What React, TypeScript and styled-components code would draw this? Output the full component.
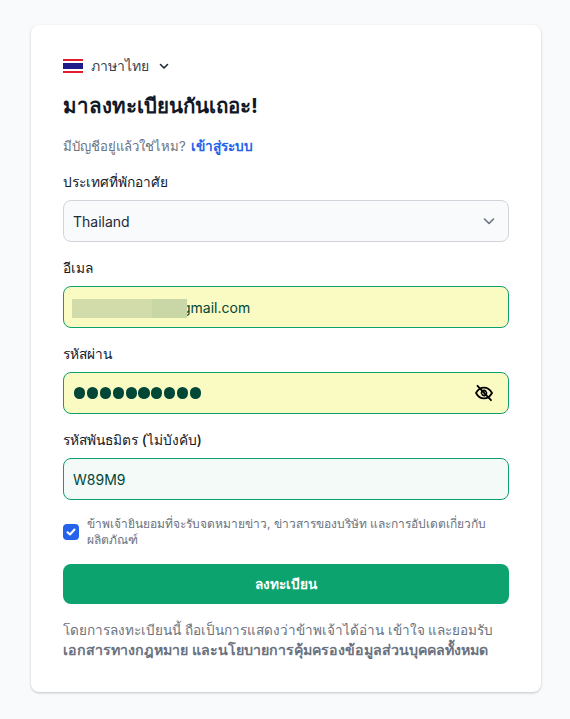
import React from "react";
import styled, { createGlobalStyle } from "styled-components";

const Global = createGlobalStyle`
  html, body { margin: 0; padding: 0; background: #f9fafb; }
  * { box-sizing: border-box; }
  body { font-family: Inter, sans-serif; color: #111827; }
`;
const Page = styled.div`
  width: 570px; height: 719px; padding: 25px 29px 27px 31px; overflow: hidden;
`;
const Card = styled.form`
  width: 510px; height: 667px; background: #fff; border-radius: 8px;
  box-shadow: 0 1px 3px rgba(0,0,0,.15), 0 1px 2px rgba(0,0,0,.08);
  padding: 32px; display: flex; flex-direction: column;
`;
const Lang = styled.div`
  display: flex; align-items: center; height: 18px; font-size: 14px; color: #374151;
`;
const LangText = styled.span` margin-left: 8px; margin-right: 9px; `;
const Title = styled.h1`
  margin: 17px 0 0; font-size: 20.5px; line-height: 28px; font-weight: 700; color: #111827;
`;
const Sub = styled.p`
  margin: 16px 0 0; font-size: 13.2px; line-height: 20px; color: #6b7280;
`;
const SubLink = styled.a` color: #2563eb; font-weight: 600; font-size: 13.7px; margin-left: 2px; `;
const Label = styled.label`
  display: block; margin-top: ${p => p.$top ?? 16}px; font-size: 13.75px; line-height: 20px; font-weight: 500; color: #111827;
`;
const Field = styled.div`
  position: relative; margin-top: 8px; height: 42px; border-radius: 8px; border: 1px solid ${p => p.$border};
  background: ${p => p.$bg}; color: ${p => p.$color}; font-size: 14px;
  display: flex; align-items: center; justify-content: space-between; padding: 0 ${p => p.$right ?? 9}px 0 9px;
`;
const Blur = styled.div`
  position: absolute; left: 8px; top: 12px; width: 115px; height: 19px;
  background: linear-gradient(90deg, #d2dcaa 0 80px, #c9d6a6 80px 115px);
`;
const EmailText = styled.span` padding-left: 109px; `;
const Dots = styled.span` display: flex; gap: 1.7px; margin-left: 1px; `;
const Dot = styled.i` display: block; width: 11.2px; height: 11.2px; border-radius: 50%; background: #014737; `;
const ConsentRow = styled.div` display: flex; align-items: center; gap: 8px; margin-top: 16px; `;
const Check = styled.span`
  flex: none; width: 16px; height: 16px; border-radius: 4px; background: #2563eb;
  display: flex; align-items: center; justify-content: center;
`;
const ConsentText = styled.span` font-size: 12px; line-height: 16px; color: #6b7280; `;
const Submit = styled.button`
  margin-top: 16px; height: 40px; width: 100%; border: 0; border-radius: 8px; background: #0ca36e;
  color: #fff; font: 600 13.6px Inter, sans-serif;
`;
const Terms = styled.p`
  margin: 16px 0 0; font-size: 13.55px; line-height: 20px; color: #6b7280;
`;
const TermsStrong = styled.span` font-weight: 600; font-size: 14.2px; `;

export default function App() {
  return (
    <Page>
      <Global />
      <Card>
        <Lang>
          <svg width="20" height="14" viewBox="0 0 20 14">
            <rect width="20" height="14" fill="#fff" />
            <rect width="20" height="2" fill="#e11d2e" />
            <rect y="12" width="20" height="2" fill="#e11d2e" />
            <rect y="4" width="20" height="6" fill="#1e1b8a" />
          </svg>
          <LangText>ภาษาไทย</LangText>
          <svg width="12" height="12" viewBox="0 0 12 12" fill="none" stroke="#1f2937" strokeWidth="1.6" strokeLinecap="round" strokeLinejoin="round">
            <path d="M2.5 4.5 6 8l3.500-3.500" />
          </svg>
        </Lang>
        <Title>มาลงทะเบียนกันเถอะ!</Title>
        <Sub>มีบัญชีอยู่แล้วใช่ไหม? <SubLink>เข้าสู่ระบบ</SubLink></Sub>
        <Label>ประเทศที่พักอาศัย</Label>
        <Field $border="#d1d5db" $bg="#f9fafb" $color="#1f2937" $right={12}>
          <span>Thailand</span>
          <svg width="14" height="14" viewBox="0 0 14 14" fill="none" stroke="#6b7280" strokeWidth="1.6" strokeLinecap="round" strokeLinejoin="round">
            <path d="M2.500 5 7 9.500 11.500 5" />
          </svg>
        </Field>
        <Label>อีเมล</Label>
        <Field $border="#0e9f6e" $bg="#fafac3" $color="#014737">
          <EmailText>gmail.com</EmailText>
          <Blur />
        </Field>
        <Label>รหัสผ่าน</Label>
        <Field $border="#0e9f6e" $bg="#fafac3" $color="#014737" $right={14}>
          <Dots>{Array.from({ length: 10 }, (_, i) => <Dot key={i} />)}</Dots>
          <svg width="20" height="20" viewBox="0 0 20 20" fill="none" stroke="#000" strokeWidth="1.8" strokeLinecap="round" strokeLinejoin="round">
            <path d="M2 10c2-3.600 4.800-5.400 8-5.400s6 1.800 8 5.400c-2 3.600-4.800 5.400-8 5.400S4 13.600 2 10Z" />
            <path d="M7.500 10a2.500 2.500 0 0 1 4.300-1.700M12.500 10a2.500 2.500 0 0 1-4.300 1.700" />
            <path d="M3.500 2.800 17 17.200" />
          </svg>
        </Field>
        <Label>รหัสพันธมิตร (ไม่บังคับ)</Label>
        <Field $border="#0e9f6e" $bg="#f3faf7" $color="#014737">W89M9</Field>
        <ConsentRow>
          <Check>
            <svg width="12" height="12" viewBox="0 0 12 12" fill="none" stroke="#fff" strokeWidth="2" strokeLinecap="round" strokeLinejoin="round">
              <path d="M2.500 6.200 5 8.500l4.500-5" />
            </svg>
          </Check>
          <ConsentText>ข้าพเจ้ายินยอมที่จะรับจดหมายข่าว, ข่าวสารของบริษัท และการอัปเดตเกี่ยวกับผลิตภัณฑ์</ConsentText>
        </ConsentRow>
        <Submit type="button">ลงทะเบียน</Submit>
        <Terms>โดยการลงทะเบียนนี้ ถือเป็นการแสดงว่าข้าพเจ้าได้อ่าน เข้าใจ และยอมรับ <TermsStrong>เอกสารทางกฎหมาย และนโยบายการคุ้มครองข้อมูลส่วนบุคคลทั้งหมด</TermsStrong></Terms>
      </Card>
    </Page>
  );
}
